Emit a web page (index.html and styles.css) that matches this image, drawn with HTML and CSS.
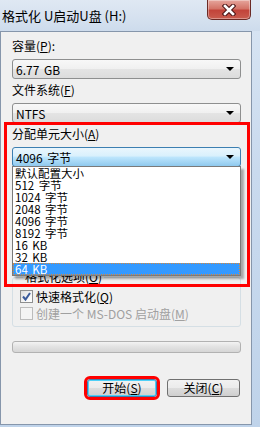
FILE: index.html
```html
<!DOCTYPE html>
<html lang="zh-CN">
<head>
    <meta charset="UTF-8">
    <title>格式化 U启动U盘 (H:)</title>
    <link rel="stylesheet" href="styles.css">
</head>
<body>
    <div class="window">
        <div class="titlebar">
            <span class="title">格式化 U启动U盘 (H:)</span>
            <div class="close-btn">
                <svg width="14" height="12" viewBox="0 0 14 12">
                    <path d="M3 2 L11 10 M11 2 L3 10" stroke="#4a1414" stroke-width="4.6" stroke-linecap="square"/>
                    <path d="M3 2 L11 10 M11 2 L3 10" stroke="#fff" stroke-width="2.6" stroke-linecap="square"/>
                </svg>
            </div>
        </div>

        <div class="client">
            <div class="field">
                <div class="label">容量(<u>P</u>):</div>
                <div class="combo"><span>6.77 GB</span><i class="arrow"></i></div>
            </div>
            <div class="field">
                <div class="label">文件系统(<u>F</u>)</div>
                <div class="combo"><span>NTFS</span><i class="arrow"></i></div>
            </div>
            <div class="field">
                <div class="label">分配单元大小(<u>A</u>)</div>
                <div class="combo focused">
                    <span>4096 字节</span><i class="arrow"></i>
                    <ul class="dropdown">
                        <li>默认配置大小</li>
                        <li>512 字节</li>
                        <li>1024 字节</li>
                        <li>2048 字节</li>
                        <li>4096 字节</li>
                        <li>8192 字节</li>
                        <li>16 KB</li>
                        <li>32 KB</li>
                        <li class="selected">64 KB</li>
                    </ul>
                </div>
            </div>

            <fieldset class="group">
                <legend>格式化选项(<u>O</u>)</legend>
                <div class="check-row">
                    <span class="checkbox">
                        <svg width="11" height="11" viewBox="0 0 11 11">
                            <path d="M2 5.5 L4.5 8.5 L9 2" fill="none" stroke="#3a5a9a" stroke-width="2"/>
                        </svg>
                    </span>
                    <span>快速格式化(<u>Q</u>)</span>
                </div>
                <div class="check-row disabled">
                    <span class="checkbox"></span>
                    <span>创建一个 MS-DOS 启动盘(<u>M</u>)</span>
                </div>
            </fieldset>

            <div class="progress"></div>

            <div class="buttons">
                <button class="btn primary">开始(<u>S</u>)</button>
                <button class="btn close">关闭(<u>C</u>)</button>
            </div>
        </div>

        <div class="highlight"></div>
    </div>
</body>
</html>
```

FILE: styles.css
```css
body {
    margin: 0;
    width: 260px;
    height: 427px;
    overflow: hidden;
    font-family: "Noto Sans CJK SC", sans-serif;
    font-size: 12px;
    color: #000;
}

.window {
    position: relative;
    width: 260px;
    height: 427px;
    background: linear-gradient(180deg, #d9e5f3 0%, #c9daee 40%, #bfd3ea 100%);
}

.titlebar {
    display: flex;
    align-items: flex-start;
    height: 31px;
    background: linear-gradient(180deg, #dfe8f3 0%, #d5e1ef 60%, #cddbec 100%);
}

.title {
    padding: 7px 0 0 2px;
    font-size: 13px;
    line-height: 17px;
}

.close-btn {
    display: flex;
    align-items: center;
    justify-content: center;
    width: 44px;
    height: 20px;
    margin: 0 9px 0 auto;
    box-sizing: border-box;
    border: 1px solid #6b2a25;
    border-top: none;
    border-radius: 0 0 5px 5px;
    background: linear-gradient(180deg, #e6a69d 0%, #d47468 45%, #c2443a 55%, #c95c4e 100%);
    box-shadow: inset 0 0 0 1px rgba(255, 255, 255, 0.35);
}

.client {
    width: 252px;
    height: 394px;
    box-sizing: border-box;
    padding: 8px 10px 0 11px;
    border: 1px solid #8696ab;
    background: #f0f0f0;
}

.label {
    height: 12px;
    line-height: 12px;
    margin-bottom: 7px;
}

.field + .field {
    margin-top: 5px;
}

.combo {
    position: relative;
    display: flex;
    align-items: center;
    height: 20px;
    box-sizing: border-box;
    padding-left: 3px;
    border: 1px solid #8e8f8f;
    border-radius: 3px;
    word-spacing: 2px;
    background: linear-gradient(180deg, #f8f8f8 0%, #f0f0f0 50%, #e4e4e4 51%, #dcdcdc 100%);
}

.combo.focused {
    border-color: #3c7fb1;
    background: linear-gradient(180deg, #eaf6fd 0%, #d9f0fc 45%, #bee6fd 50%, #8fc9ee 100%);
}

.arrow {
    position: absolute;
    right: 6px;
    top: 7px;
    width: 0;
    height: 0;
    border-left: 4px solid transparent;
    border-right: 4px solid transparent;
    border-top: 4px solid #000;
}

.dropdown {
    position: absolute;
    top: 100%;
    left: -1px;
    z-index: 2;
    width: 229px;
    margin: 0;
    padding: 0;
    list-style: none;
    box-sizing: border-box;
    border: 1px solid #7a7a7a;
    background: #fff;
    box-shadow: 3px 3px 2px rgba(0, 0, 0, 0.3);
}

.dropdown li {
    height: 12px;
    line-height: 12px;
    padding-left: 2px;
    font-size: 11.5px;
}

.dropdown li.selected {
    background: #3399ff;
    color: #fff;
    outline: 1px dotted #d9883a;
    outline-offset: -1px;
}

.group {
    margin: 104px 0 0;
    padding: 7px 7px 6px;
    border: 1px solid #d5dfe5;
    border-radius: 3px;
}

.group legend {
    padding: 0 2px;
    margin-left: 3px;
    line-height: 12px;
}

.check-row {
    display: flex;
    align-items: center;
    gap: 3px;
    height: 13px;
    line-height: 13px;
}

.check-row + .check-row {
    margin-top: 4px;
}

.checkbox {
    display: flex;
    align-items: center;
    justify-content: center;
    width: 13px;
    height: 13px;
    box-sizing: border-box;
    border: 1px solid #8e8f8f;
    background: linear-gradient(135deg, #dcdcdc 0%, #f6f6f6 60%, #fff 100%);
}

.check-row.disabled {
    color: #a0a0a0;
}

.check-row.disabled .checkbox {
    border-color: #bcbcbc;
    background: #f4f4f4;
}

.progress {
    height: 12px;
    margin-top: 14px;
    box-sizing: border-box;
    border: 1px solid #b2b2b2;
    border-radius: 3px;
    background: linear-gradient(180deg, #f3f3f3 0%, #e2e2e2 50%, #d6d6d6 100%);
}

.buttons {
    display: flex;
    justify-content: flex-end;
    gap: 10px;
    margin-top: 26px;
    padding-right: 1px;
}

.btn {
    height: 18px;
    padding: 0;
    box-sizing: border-box;
    border: 1px solid #707070;
    border-radius: 3px;
    font-family: inherit;
    font-size: 12px;
    line-height: 16px;
    color: #000;
    background: linear-gradient(180deg, #f2f2f2 0%, #ebebeb 50%, #dddddd 51%, #cfcfcf 100%);
}

.btn.primary {
    width: 70px;
    border-color: #3c7fb1;
    box-shadow: inset 0 0 0 1px #4fd0f7;
    outline: 3px solid #f00;
}

.btn.close {
    width: 73px;
}

.highlight {
    position: absolute;
    left: 4px;
    top: 122px;
    width: 246px;
    height: 165px;
    box-sizing: border-box;
    border: 3px solid #f00;
    z-index: 3;
}
```
